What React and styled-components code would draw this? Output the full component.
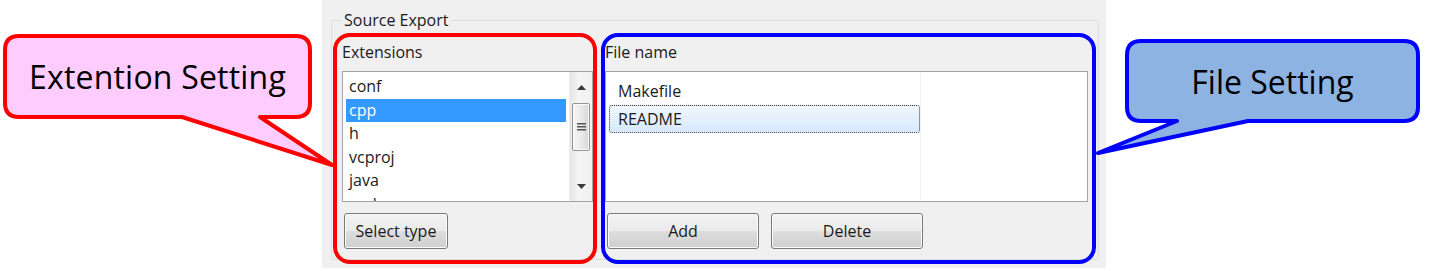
import React from 'react'
import styled, { createGlobalStyle } from 'styled-components'

const GlobalStyle = createGlobalStyle`
  body {
    margin: 0;
    background: #ffffff;
    font-family: "Open Sans", "Liberation Sans", sans-serif;
  }
`

const Page = styled.div`
  display: flex;
  width: 1448px;
  height: 271px;
  background: #ffffff;
`

const Side = styled.div`
  position: relative;
  z-index: 3;
  width: ${p => p.$width}px;
  flex: none;
`

const Callout = styled.div`
  position: relative;
  width: ${p => p.$w}px;
  height: ${p => p.$h}px;
  margin-top: ${p => p.$top}px;
  margin-left: ${p => p.$left}px;
  display: flex;
  align-items: center;
  justify-content: center;

  svg {
    position: absolute;
    left: 0;
    top: 0;
    overflow: visible;
  }
`

const CalloutText = styled.span`
  position: relative;
  font-family: "Open Sans", sans-serif;
  font-size: 32px;
  color: #000000;
  letter-spacing: ${p => p.$spacing || 0}px;
  white-space: nowrap;
`

const Panel = styled.div`
  width: 784px;
  height: 268px;
  flex: none;
  box-sizing: border-box;
  background: #f0f0f0;
  padding: 20px 7px 8px 9px;
`

const GroupBox = styled.div`
  position: relative;
  height: 100%;
  box-sizing: border-box;
  border: 1px solid #d5dfe5;
  border-radius: 3px;
  padding: 21px 10px 10px;
  display: flex;
  gap: 12px;
`

const Legend = styled.span`
  position: absolute;
  top: -11px;
  left: 9px;
  padding: 0 3px;
  background: #f0f0f0;
  font-size: 16px;
  line-height: 20px;
  color: #1a1a1a;
`

const Column = styled.div`
  position: relative;
  display: flex;
  flex-direction: column;
  width: ${p => (p.$width ? `${p.$width}px` : 'auto')};
  flex: ${p => (p.$width ? 'none' : '1')};

  &::after {
    content: '';
    position: absolute;
    z-index: 2;
    top: ${p => p.$inset[0]}px;
    right: ${p => p.$inset[1]}px;
    bottom: ${p => p.$inset[2]}px;
    left: ${p => p.$inset[3]}px;
    border: 4px solid ${p => p.$color};
    border-radius: 17px;
    pointer-events: none;
  }
`

const Label = styled.div`
  font-size: 16px;
  line-height: 20px;
  color: #1a1a1a;
  margin-bottom: 9px;
`

const ListBox = styled.div`
  display: flex;
  height: 131px;
  box-sizing: border-box;
  border: 1px solid #a4a4a4;
  background: #ffffff;
  overflow: hidden;
`

const Items = styled.div`
  flex: 1;
  padding: 3px 3px 0;
  overflow: hidden;
`

const Item = styled.div`
  height: 23.5px;
  line-height: 23.5px;
  padding-left: 3px;
  font-size: 16px;
  color: ${p => (p.$selected ? '#ffffff' : '#1a1a1a')};
  background: ${p => (p.$selected ? '#3399ff' : 'transparent')};
`

const ScrollBar = styled.div`
  width: 22px;
  flex: none;
  display: flex;
  flex-direction: column;
  background: linear-gradient(90deg, #e6e6e6, #f4f4f4 40%, #f1f1f1);
  border-left: 1px solid #ececec;
`

const Arrow = styled.div`
  height: 30px;
  flex: none;
  display: flex;
  align-items: center;
  justify-content: center;
`

const Track = styled.div`
  flex: 1;
`

const Thumb = styled.div`
  height: 48px;
  margin: 1px 2px 0;
  box-sizing: border-box;
  border: 1px solid #959595;
  border-radius: 2px;
  background: linear-gradient(90deg, #f6f6f6, #e9e9e9 55%, #d6d6d6);
  box-shadow: inset 0 0 0 1px #fbfbfb;
  display: flex;
  align-items: center;
  justify-content: center;
`

const DetailList = styled.div`
  width: 315px;
  box-sizing: border-box;
  padding: 5px 0 0 3px;
  margin-bottom: 2px;
  border-right: 1px solid #edf2f9;
`

const FileRow = styled.div`
  height: 28px;
  box-sizing: border-box;
  line-height: 26px;
  padding-left: 8px;
  font-size: 16px;
  color: #1a1a1a;
  border: 1px ${p => (p.$selected ? 'dotted #3a3a3a' : 'solid transparent')};
  border-radius: 3px;
  background: ${p => (p.$selected ? 'linear-gradient(#f1f7fe, #d6e8fc)' : 'transparent')};
`

const ButtonRow = styled.div`
  display: flex;
  gap: 12px;
  margin-top: 11px;
  padding-left: 2px;
`

const Button = styled.button`
  width: ${p => p.$width}px;
  height: 36px;
  box-sizing: border-box;
  border: 1px solid #7a7a7a;
  border-radius: 3px;
  padding: 0;
  font-family: "Open Sans", sans-serif;
  font-size: 16px;
  color: #1a1a1a;
  background: linear-gradient(#f3f3f3 0%, #ebebeb 48%, #dddddd 52%, #cfcfcf 100%);
  box-shadow: inset 0 0 0 1px #fbfbfb;
`

const UpArrow = () => (
  <svg width="9" height="5" viewBox="0 0 9 5">
    <path d="M0 5 L4.5 0 L9 5 Z" fill="#3a3a3a" />
  </svg>
)

const DownArrow = () => (
  <svg width="9" height="5" viewBox="0 0 9 5">
    <path d="M0 0 L9 0 L4.5 5 Z" fill="#3a3a3a" />
  </svg>
)

const Grip = () => (
  <svg width="9" height="9" viewBox="0 0 9 9">
    {[0, 3, 6].map(y => (
      <rect key={y} x="0" y={y} width="9" height="1.5" fill="#555" />
    ))}
  </svg>
)

const extensions = ['conf', 'cpp', 'h', 'vcproj', 'java', 'mak']
const files = ['Makefile', 'README']

export default function App() {
  return (
    <>
      <GlobalStyle />
      <Page>
        <Side $width={322}>
          <Callout $w={309} $h={85} $top={34} $left={3}>
            <svg width="309" height="85">
              <path
                d="M16 2 H293 Q307 2 307 16 V69 Q307 83 293 83 H257 L329 131 L179 83 H16 Q2 83 2 69 V16 Q2 2 16 2 Z"
                fill="#ffccff"
                stroke="#ff0000"
                strokeWidth="4"
                strokeLinejoin="round"
              />
            </svg>
            <CalloutText $spacing={0.2}>Extention Setting</CalloutText>
          </Callout>
        </Side>

        <Panel>
          <GroupBox>
            <Legend>Source Export</Legend>

            <Column $width={251} $color="#ff0000" $inset={[-9, -4, -15, -9]}>
              <Label>Extensions</Label>
              <ListBox>
                <Items>
                  {extensions.map(ext => (
                    <Item key={ext} $selected={ext === 'cpp'}>
                      {ext}
                    </Item>
                  ))}
                </Items>
                <ScrollBar>
                  <Arrow>
                    <UpArrow />
                  </Arrow>
                  <Thumb>
                    <Grip />
                  </Thumb>
                  <Track />
                  <Arrow>
                    <DownArrow />
                  </Arrow>
                </ScrollBar>
              </ListBox>
              <ButtonRow>
                <Button $width={104}>Select type</Button>
              </ButtonRow>
            </Column>

            <Column $color="#0000ff" $inset={[-9, -8, -15, -4]}>
              <Label>File name</Label>
              <ListBox>
                <DetailList>
                  {files.map(f => (
                    <FileRow key={f} $selected={f === 'README'}>
                      {f}
                    </FileRow>
                  ))}
                </DetailList>
                <Track />
              </ListBox>
              <ButtonRow>
                <Button $width={152}>Add</Button>
                <Button $width={152}>Delete</Button>
              </ButtonRow>
            </Column>
          </GroupBox>
        </Panel>

        <Side $width={342}>
          <Callout $w={295} $h={84} $top={39} $left={19}>
            <svg width="295" height="84">
              <path
                d="M16 2 H279 Q293 2 293 16 V68 Q293 82 279 82 H123 L-27 114 L52 82 H16 Q2 82 2 68 V16 Q2 2 16 2 Z"
                fill="#8db3e2"
                stroke="#0000ff"
                strokeWidth="4"
                strokeLinejoin="round"
              />
            </svg>
            <CalloutText>File Setting</CalloutText>
          </Callout>
        </Side>
      </Page>
    </>
  )
}
